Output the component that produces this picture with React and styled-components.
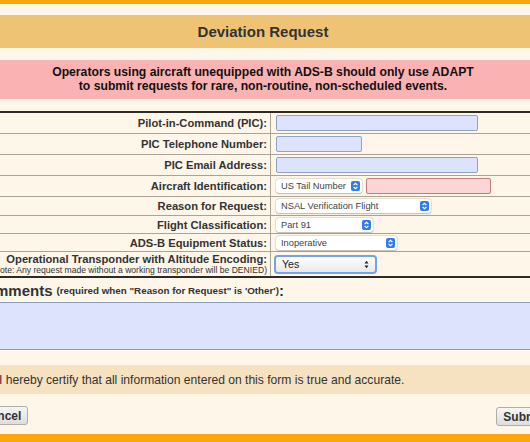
import React from 'react'
import styled, { createGlobalStyle } from 'styled-components'

const GlobalStyle = createGlobalStyle`
  html, body {
    margin: 0;
    padding: 0;
    background: #fdf6e9;
    overflow: hidden;
  }
  body {
    font-family: "Liberation Sans", Arial, sans-serif;
    color: #333;
  }
`

const Viewport = styled.div`
  width: 530px;
  height: 442px;
  overflow: hidden;
  display: flex;
  justify-content: center;
  padding-right: 4px;
  box-sizing: border-box;
`

const Page = styled.div`
  flex: 0 0 720px;
  width: 720px;
  display: flex;
  flex-direction: column;
`

const OrangeBar = styled.div`
  height: ${({ $h }) => $h}px;
  background: #fba60d;
  margin-top: ${({ $mt }) => $mt || 0}px;
`

const TitleBand = styled.div`
  margin-top: 11px;
  height: 33px;
  background: #efc374;
  display: flex;
  align-items: center;
  justify-content: center;
  font-size: 15px;
  font-weight: bold;
  color: #333;
`

const Warning = styled.div`
  margin-top: 12px;
  height: 40px;
  background: #fbb2b3;
  display: flex;
  flex-direction: column;
  align-items: center;
  justify-content: center;
  font-size: 12.2px;
  line-height: 14px;
  font-weight: bold;
  color: #111;
`

const Table = styled.div`
  margin: 12px 72px 0;
  border-top: 2px solid #2e2b27;
  border-bottom: 2px solid #2e2b27;
`

const Row = styled.div`
  display: grid;
  grid-template-columns: 296px 1fr;
  height: ${({ $h }) => $h}px;
  border-bottom: ${({ $last }) => ($last ? 'none' : '1px solid #aaa396')};
`

const Label = styled.div`
  border-right: 1px solid #aaa396;
  display: flex;
  flex-direction: column;
  align-items: flex-end;
  justify-content: center;
  padding-right: 3px;
  font-size: 11.2px;
  font-weight: bold;
  color: #333;
  line-height: 12px;
  white-space: nowrap;
`

const Note = styled.span`
  font-size: 8.6px;
  font-weight: normal;
  line-height: 10px;
  color: #333;
`

const Field = styled.div`
  display: flex;
  align-items: center;
  gap: 4px;
  padding-left: 5px;
`

const TextInput = styled.div`
  width: ${({ $w }) => $w}px;
  height: 16px;
  box-sizing: border-box;
  border: 1px solid ${({ $pink }) => ($pink ? '#c27d7d' : '#8fa3c2')};
  border-radius: 2px;
  background: ${({ $pink }) => ($pink ? '#fcd6d7' : '#dde3fc')};
`

const SelectBox = styled.div`
  width: ${({ $w }) => $w}px;
  height: ${({ $h }) => $h || 14}px;
  box-sizing: border-box;
  background: #fff;
  border-radius: 3px;
  box-shadow: 0 0 0 0.5px rgba(0, 0, 0, 0.12), 0 0.5px 1.5px rgba(0, 0, 0, 0.2);
  display: flex;
  align-items: center;
  justify-content: space-between;
  padding: 0 2px 0 5px;
  font-size: 9.3px;
  color: #444;
  white-space: nowrap;
`

const FocusSelect = styled.div`
  width: 103px;
  height: 19px;
  margin-left: -2px;
  box-sizing: border-box;
  border: 2.5px solid #74a2ee;
  border-radius: 4px;
  background: linear-gradient(#ffffff, #e9e9e9);
  display: flex;
  align-items: center;
  justify-content: space-between;
  padding: 0 6px 0 6px;
  font-size: 10.6px;
  color: #222;
`

const CommentsHead = styled.div`
  margin: 3px 72px 0;
  height: 18px;
  display: flex;
  align-items: center;
  font-size: 15px;
  font-weight: bold;
  color: #333;
  white-space: nowrap;
`

const Small = styled.span`
  font-size: 9.8px;
  margin-left: 4px;
`

const TextArea = styled.div`
  margin: 3px 72px 0;
  height: 49px;
  box-sizing: border-box;
  border: 1px solid #8a9dbc;
  border-radius: 2px;
  background: #dde3fc;
`

const CertifyBand = styled.div`
  margin-top: 15px;
  height: 29px;
  background: #f6e2c1;
  display: flex;
  align-items: center;
  padding-left: 96px;
  font-size: 12.1px;
  color: #333;
  white-space: nowrap;
`

const ButtonRow = styled.div`
  margin: 12px 72px 0;
  display: flex;
  justify-content: space-between;
`

const Button = styled.div`
  height: 19px;
  box-sizing: border-box;
  padding: 0 6px;
  border: 1px solid #b1aca4;
  border-radius: 3px;
  background: linear-gradient(#f6f6f6, #dedede);
  display: flex;
  align-items: center;
  font-size: 12px;
  font-weight: bold;
  color: #333;
  margin-top: ${({ $mt }) => $mt || 0}px;
`

const BlueStepper = () => (
  <svg width="9" height="10" viewBox="0 0 9 10">
    <rect x="0" y="0" width="9" height="10" rx="2" fill="#2f7cf3" />
    <path d="M2.6 4 L4.5 2.3 L6.4 4" fill="none" stroke="#fff" strokeWidth="1.1" />
    <path d="M2.6 6 L4.5 7.7 L6.4 6" fill="none" stroke="#fff" strokeWidth="1.1" />
  </svg>
)

const BlackStepper = () => (
  <svg width="5" height="9" viewBox="0 0 5 9">
    <path d="M0.5 3.6 L2.5 0.8 L4.5 3.6 Z" fill="#222" />
    <path d="M0.5 5.4 L2.5 8.2 L4.5 5.4 Z" fill="#222" />
  </svg>
)

const Select = ({ w, children }) => (
  <SelectBox $w={w}>
    <span>{children}</span>
    <BlueStepper />
  </SelectBox>
)

export default function App() {
  return (
    <>
      <GlobalStyle />
      <Viewport>
        <Page>
          <OrangeBar $h={4} />
          <TitleBand>Deviation Request</TitleBand>
          <Warning>
            <div>Operators using aircraft unequipped with ADS-B should only use ADAPT</div>
            <div>to submit requests for rare, non-routine, non-scheduled events.</div>
          </Warning>

          <Table>
            <Row $h={20}>
              <Label>Pilot-in-Command (PIC):</Label>
              <Field><TextInput $w={202} /></Field>
            </Row>
            <Row $h={20}>
              <Label>PIC Telephone Number:</Label>
              <Field><TextInput $w={86} /></Field>
            </Row>
            <Row $h={20}>
              <Label>PIC Email Address:</Label>
              <Field><TextInput $w={202} /></Field>
            </Row>
            <Row $h={20}>
              <Label>Aircraft Identification:</Label>
              <Field>
                <Select w={86}>US Tail Number</Select>
                <TextInput $w={125} $pink />
              </Field>
            </Row>
            <Row $h={18}>
              <Label>Reason for Request:</Label>
              <Field><Select w={155}>NSAL Verification Flight</Select></Field>
            </Row>
            <Row $h={17}>
              <Label>Flight Classification:</Label>
              <Field><Select w={97}>Part 91</Select></Field>
            </Row>
            <Row $h={17}>
              <Label>ADS-B Equipment Status:</Label>
              <Field><Select w={121}>Inoperative</Select></Field>
            </Row>
            <Row $h={24} $last>
              <Label>
                <span>Operational Transponder with Altitude Encoding:</span>
                <Note>(Note: Any request made without a working transponder will be DENIED)</Note>
              </Label>
              <Field>
                <FocusSelect>
                  <span>Yes</span>
                  <BlackStepper />
                </FocusSelect>
              </Field>
            </Row>
          </Table>

          <CommentsHead>
            Comments<Small>(required when "Reason for Request" is 'Other')</Small>:
          </CommentsHead>
          <TextArea />

          <CertifyBand>I hereby certify that all information entered on this form is true and accurate.</CertifyBand>

          <ButtonRow>
            <Button>Cancel</Button>
            <Button $mt={1}>Submit</Button>
          </ButtonRow>
          <OrangeBar $h={8} $mt={8} />
        </Page>
      </Viewport>
    </>
  )
}
